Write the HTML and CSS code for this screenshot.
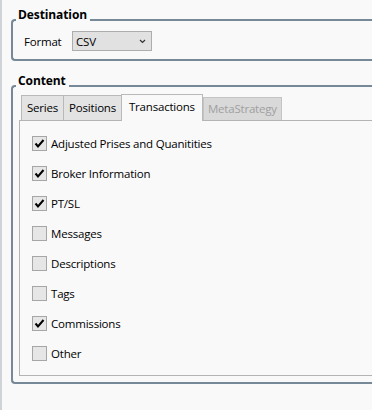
FILE: index.html
```html
<!DOCTYPE html>
<html lang="en">
<head>
  <meta charset="UTF-8">
  <title>Export</title>
  <link rel="stylesheet" href="styles.css">
</head>
<body>
  <div class="page">
    <fieldset class="group group-dest">
      <legend>Destination</legend>
      <div class="format-row">
        <span class="format-label">Format</span>
        <div class="select">
          <span>CSV</span>
          <svg class="chevron" width="7" height="5" viewBox="0 0 7 5"><path d="M1 1 L3.5 3.5 L6 1" fill="none" stroke="#333" stroke-width="1.2"/></svg>
        </div>
      </div>
    </fieldset>

    <fieldset class="group group-content">
      <legend>Content</legend>
      <div class="tabs">
        <div class="tab">Series</div>
        <div class="tab">Positions</div>
        <div class="tab active">Transactions</div>
        <div class="tab disabled">MetaStrategy</div>
      </div>
      <div class="panel">
        <label class="check-row"><span class="box on"><svg width="13" height="13" viewBox="0 0 13 13"><path d="M2.5 6.5 L5 9.5 L10.5 3" fill="none" stroke="#000" stroke-width="2"/></svg></span>Adjusted Prises and Quanitities</label>
        <label class="check-row"><span class="box on"><svg width="13" height="13" viewBox="0 0 13 13"><path d="M2.5 6.5 L5 9.5 L10.5 3" fill="none" stroke="#000" stroke-width="2"/></svg></span>Broker Information</label>
        <label class="check-row"><span class="box on"><svg width="13" height="13" viewBox="0 0 13 13"><path d="M2.5 6.5 L5 9.5 L10.5 3" fill="none" stroke="#000" stroke-width="2"/></svg></span>PT/SL</label>
        <label class="check-row"><span class="box"></span>Messages</label>
        <label class="check-row"><span class="box"></span>Descriptions</label>
        <label class="check-row"><span class="box"></span>Tags</label>
        <label class="check-row"><span class="box on"><svg width="13" height="13" viewBox="0 0 13 13"><path d="M2.5 6.5 L5 9.5 L10.5 3" fill="none" stroke="#000" stroke-width="2"/></svg></span>Commissions</label>
        <label class="check-row"><span class="box"></span>Other</label>
      </div>
    </fieldset>
  </div>
</body>
</html>
```

FILE: styles.css
```css
html, body { margin: 0; padding: 0; }
body {
  background: #f9f9f9;
  font-family: "Open Sans", "Noto Sans", sans-serif;
  font-size: 11.5px;
  letter-spacing: -0.2px;
  color: #000;
  border-left: 2px solid #cfd3d7;
  height: 410px;
  box-sizing: border-box;
  overflow: hidden;
}
.page {
  padding-top: 9px;
}
.group {
  margin: 0 -20px 0 9px;
  padding: 0 0 0 3px;
  border: 2px solid #778899;
  border-right: none;
  border-radius: 4px 0 0 4px;
  min-width: 0;
}
.group legend {
  font-weight: bold;
  font-size: 12px;
  letter-spacing: -0.1px;
  line-height: 12px;
  padding: 0 3px 10px 2px;
}
.group-dest {
  padding-bottom: 8px;
}
.group-content {
  margin-top: 14px;
  padding-bottom: 6px;
}

/* format selector */
.format-row {
  display: flex;
  align-items: center;
  margin-left: 8px;
}
.format-label {
  width: 48px;
}
.select {
  width: 80px;
  height: 20px;
  box-sizing: border-box;
  border: 1px solid #adadad;
  background: #e1e1e1;
  display: flex;
  align-items: center;
  justify-content: space-between;
  padding: 0 5px 0 3px;
}
.chevron { display: block; }

/* tabs */
.tabs {
  display: flex;
  align-items: flex-end;
  margin: -3px 0 0 5px;
  height: 26px;
  position: relative;
  z-index: 1;
}
.tab {
  height: 25px;
  line-height: 23px;
  box-sizing: border-box;
  padding: 0 5px;
  border: 1px solid #b9b9b9;
  border-bottom: none;
  background: #e3e3e3;
  margin-right: -1px;
}
.tab.active {
  height: 27px;
  line-height: 24px;
  background: #f9f9f9;
  margin-bottom: -1px;
  padding: 0 7px;
}
.tab.disabled {
  height: 23px;
  line-height: 22px;
  color: #a0a0a0;
  background: #d9d9d9;
  border-color: #c4c4c4;
  margin-left: 1px;
  padding: 0 4px;
}

/* panel */
.panel {
  margin-left: 3px;
  border: 1px solid #b4b4b4;
  border-right: none;
  padding: 7px 0 7px 12px;
}
.check-row {
  display: flex;
  align-items: center;
  height: 30px;
}
.box {
  width: 15px;
  height: 15px;
  box-sizing: border-box;
  border: 1px solid #a6a6a6;
  background: #e6e6e6;
  margin-right: 4px;
  display: flex;
  align-items: center;
  justify-content: center;
}
.box svg { display: block; }
```
